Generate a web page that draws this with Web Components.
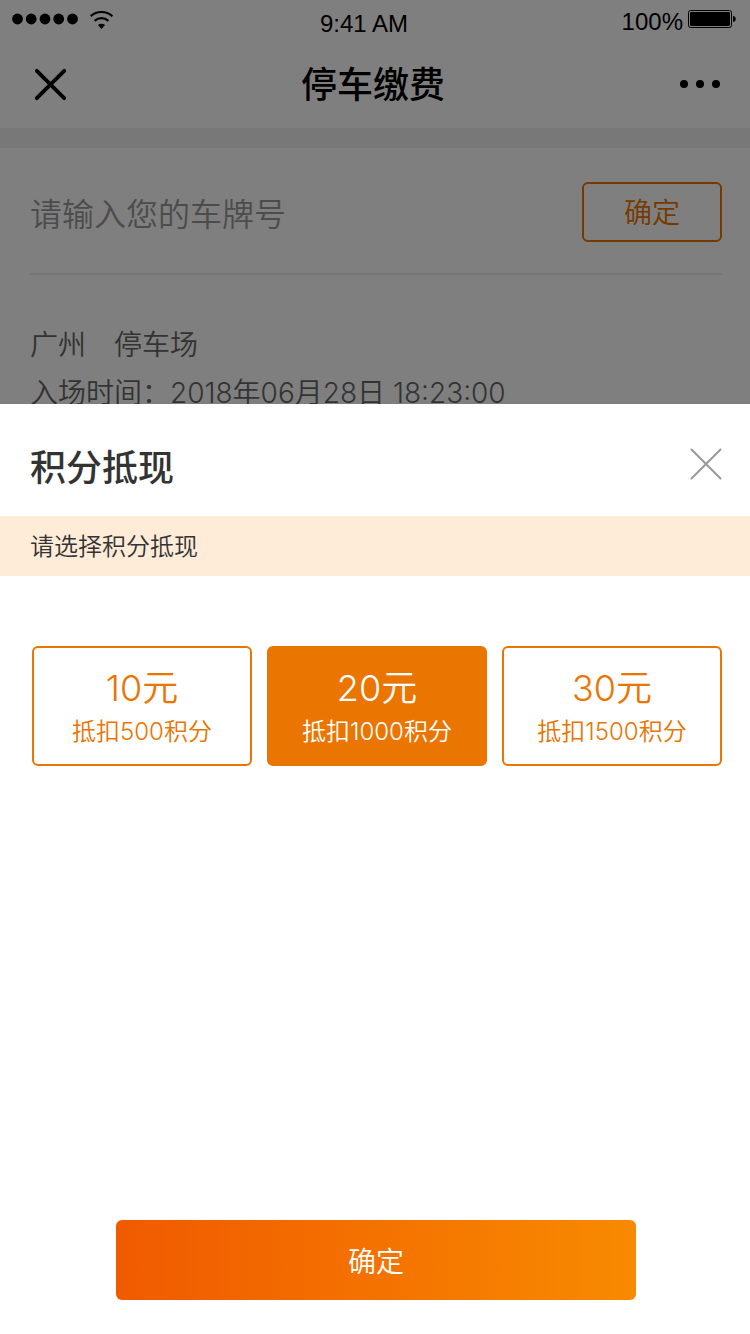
<!DOCTYPE html>
<html lang="zh-CN">
<head>
<meta charset="utf-8">
<meta name="viewport" content="width=device-width, initial-scale=1">
<title>停车缴费</title>
<style>
  body {
    margin: 0;
    background: #fff;
    color: #333;
    font-family: Inter, "Noto Sans CJK SC", sans-serif;
    font-weight: 350;
    --brand: #ea7500;
    --gutter: 30px;
    --gutter-end: 28px;
  }
</style>
</head>
<body>
<parking-app></parking-app>

<script>
  const define = (name, html, setup) => {
    const template = document.createElement('template');
    template.innerHTML = html;
    customElements.define(name, class extends HTMLElement {
      constructor() {
        super();
        this.attachShadow({ mode: 'open' }).append(template.content.cloneNode(true));
      }
      connectedCallback() {
        if (setup) setup(this, this.shadowRoot);
      }
    });
  };

  define('status-bar', `
    <style>
      :host {
        display: grid;
        grid-template-columns: 1fr auto 1fr;
        height: 40px;
        padding: 0 14px 0 12px;
        color: #000;
        font: 24px/44px "Liberation Sans", Arial, sans-serif;
      }
      .signal, .power { display: flex; }
      .signal { gap: 12px; padding-top: 9px; }
      .power { justify-content: flex-end; gap: 5px; }
      .power svg { margin-top: 10px; }
      .time { padding-right: 20px; line-height: 48px; }
      svg { display: block; flex: none; }
    </style>
    <div class="signal">
      <svg width="66" height="20" viewBox="0 0 66 20" aria-hidden="true">
        <circle cx="5.5" cy="10" r="5.4"/><circle cx="19.2" cy="10" r="5.4"/><circle cx="33" cy="10" r="5.4"/><circle cx="46.7" cy="10" r="5.4"/><circle cx="60.5" cy="10" r="5.4"/>
      </svg>
      <svg width="24" height="20" viewBox="0 0 24 20" aria-hidden="true">
        <path d="M.6 7.200C6.500 1.600 16.500 1.600 22.400 7.200M4.600 11.900C8.600 8.300 14.400 8.300 18.400 11.900" fill="none" stroke="#000" stroke-width="2.200"/>
        <path d="M8 16C10 14.400 13 14.400 15 16L11.500 20Z"/>
      </svg>
    </div>
    <span class="time">9:41 AM</span>
    <div class="power">
      <span>100%</span>
      <svg width="48" height="18" viewBox="0 0 48 18" aria-hidden="true">
        <rect x=".5" y=".5" width="43" height="17" rx="2" fill="none" stroke="#000"/>
        <rect x="2" y="2" width="40" height="14" rx="1"/>
        <path d="M45 6C48.700 6 48.700 12 45 12Z"/>
      </svg>
    </div>
  `);

  define('nav-bar', `
    <style>
      :host {
        display: flex;
        align-items: center;
        justify-content: space-between;
        height: 88px;
        padding: 0 28px 0 30px;
        color: #000;
      }
      h1 { margin: 0; padding: 2px 4px 0 0; font-size: 36px; font-weight: 500; line-height: 52px; }
      button { display: block; padding: 0; border: 0; background: none; }
      svg { display: block; }
    </style>
    <button type="button" aria-label="关闭">
      <svg width="42" height="42" viewBox="0 0 42 42"><path d="M6.800 7.800L34.200 35.200M34.200 7.800L6.800 35.200" stroke="#000" stroke-width="3.800" stroke-linecap="round"/></svg>
    </button>
    <h1><slot></slot></h1>
    <button type="button" aria-label="更多">
      <svg width="44" height="42" viewBox="0 0 44 42"><circle cx="6" cy="21" r="4"/><circle cx="22" cy="21" r="4"/><circle cx="38" cy="21" r="4"/></svg>
    </button>
  `);

  define('plate-form', `
    <style>
      :host { display: block; margin: 0 var(--gutter-end) 0 var(--gutter); border-bottom: 2px solid #ebebeb; }
      form { display: flex; align-items: center; gap: 20px; padding: 34px 0 31px; }
      input {
        flex: 1;
        min-width: 0;
        box-sizing: border-box;
        height: 60px;
        padding: 4px 0 0;
        border: 0;
        background: none;
        color: #333;
        font: inherit;
        font-size: 32px;
      }
      input::placeholder { color: #999; opacity: 1; }
      button {
        width: 140px;
        height: 60px;
        padding: 2px 0 0;
        border: 2px solid var(--brand);
        border-radius: 6px;
        background: none;
        color: var(--brand);
        font: inherit;
        font-size: 28px;
        line-height: 52px;
      }
    </style>
    <form>
      <input type="text" aria-label="车牌号" placeholder="请输入您的车牌号">
      <button type="button">确定</button>
    </form>
  `);

  define('parking-info', `
    <style>
      :host {
        display: block;
        padding: 46px var(--gutter-end) 0 var(--gutter);
        color: #666;
        font-size: 28px;
        line-height: 48px;
      }
      p { margin: 0; }
    </style>
    <p>广州　停车场</p>
    <p>入场时间：2018年06月28日 18:23:00</p>
  `);

  define('points-picker', `
    <style>
      :host { display: block; }
      fieldset {
        display: flex;
        justify-content: space-between;
        gap: 8px;
        margin: 0;
        padding: 70px var(--gutter-end) 0 32px;
        border: 0;
      }
      label {
        position: relative;
        flex: 0 1 220px;
        box-sizing: border-box;
        padding: 18px 0 10px;
        border: 2px solid var(--brand);
        border-radius: 6px;
        color: var(--brand);
        text-align: center;
        font-size: 24px;
        line-height: 44px;
      }
      label:has(:checked) { background: var(--brand); color: #fff; }
      input { position: absolute; inset: 0; width: 100%; height: 100%; margin: 0; opacity: 0; }
      span { display: block; }
      .amount { font-size: 36px; }
    </style>
    <fieldset aria-label="请选择积分抵现"></fieldset>
  `, (host, root) => {
    const fieldset = root.querySelector('fieldset');
    if (fieldset.children.length) return;
    const chosen = host.getAttribute('value');
    for (const [amount, points] of [[10, 500], [20, 1000], [30, 1500]]) {
      const label = document.createElement('label');
      label.innerHTML = `<input type="radio" name="amount" value="${amount}"${chosen == amount ? ' checked' : ''}>
        <span class="amount">${amount}元</span><span>抵扣${points}积分</span>`;
      fieldset.append(label);
    }
  });

  define('bottom-sheet', `
    <style>
      :host {
        display: flex;
        flex-direction: column;
        flex: 1;
        background: #fff;
      }
      header {
        display: flex;
        align-items: center;
        justify-content: space-between;
        height: 112px;
        padding: 0 var(--gutter-end) 0 var(--gutter);
      }
      h2 { margin: 0; padding-top: 16px; font-size: 36px; font-weight: 500; line-height: 52px; }
      header button { padding: 8px 0 0; border: 0; background: none; }
      svg { display: block; }
      .tip {
        margin: 0;
        padding: 2px var(--gutter) 0;
        background: #feebd8;
        font-size: 24px;
        line-height: 58px;
      }
      .content { flex: 1; }
      footer { display: flex; justify-content: center; padding: 34px 114px 34px 116px; }
      .submit {
        flex: 1;
        height: 80px;
        padding: 4px 0 0;
        border: 0;
        border-radius: 6px;
        background: linear-gradient(90deg, #f05a00, #f88a00);
        color: #fff;
        font: inherit;
        font-size: 28px;
        line-height: 76px;
      }
    </style>
    <header>
      <h2><slot name="title"></slot></h2>
      <button type="button" aria-label="关闭">
        <svg width="32" height="32" viewBox="0 0 32 32"><path d="M1.500 1.500L30.500 30.500M30.500 1.500L1.500 30.500" stroke="#999" stroke-width="2" stroke-linecap="round"/></svg>
      </button>
    </header>
    <p class="tip"><slot name="tip"></slot></p>
    <div class="content"><slot></slot></div>
    <footer><button class="submit" type="button">确定</button></footer>
  `);

  define('parking-app', `
    <style>
      :host { display: block; position: relative; min-height: 100vh; }
      .band { height: 20px; background: #f0f0f0; }
      .scrim {
        position: absolute;
        inset: 0;
        display: flex;
        flex-direction: column;
        padding-top: 404px;
        background: rgba(0, 0, 0, .5);
      }
    </style>
    <status-bar></status-bar>
    <nav-bar>停车缴费</nav-bar>
    <div class="band"></div>
    <plate-form></plate-form>
    <parking-info></parking-info>
    <div class="scrim">
      <bottom-sheet role="dialog" aria-label="积分抵现">
        <span slot="title">积分抵现</span>
        <span slot="tip">请选择积分抵现</span>
        <points-picker value="20"></points-picker>
      </bottom-sheet>
    </div>
  `);
</script>
</body>
</html>
